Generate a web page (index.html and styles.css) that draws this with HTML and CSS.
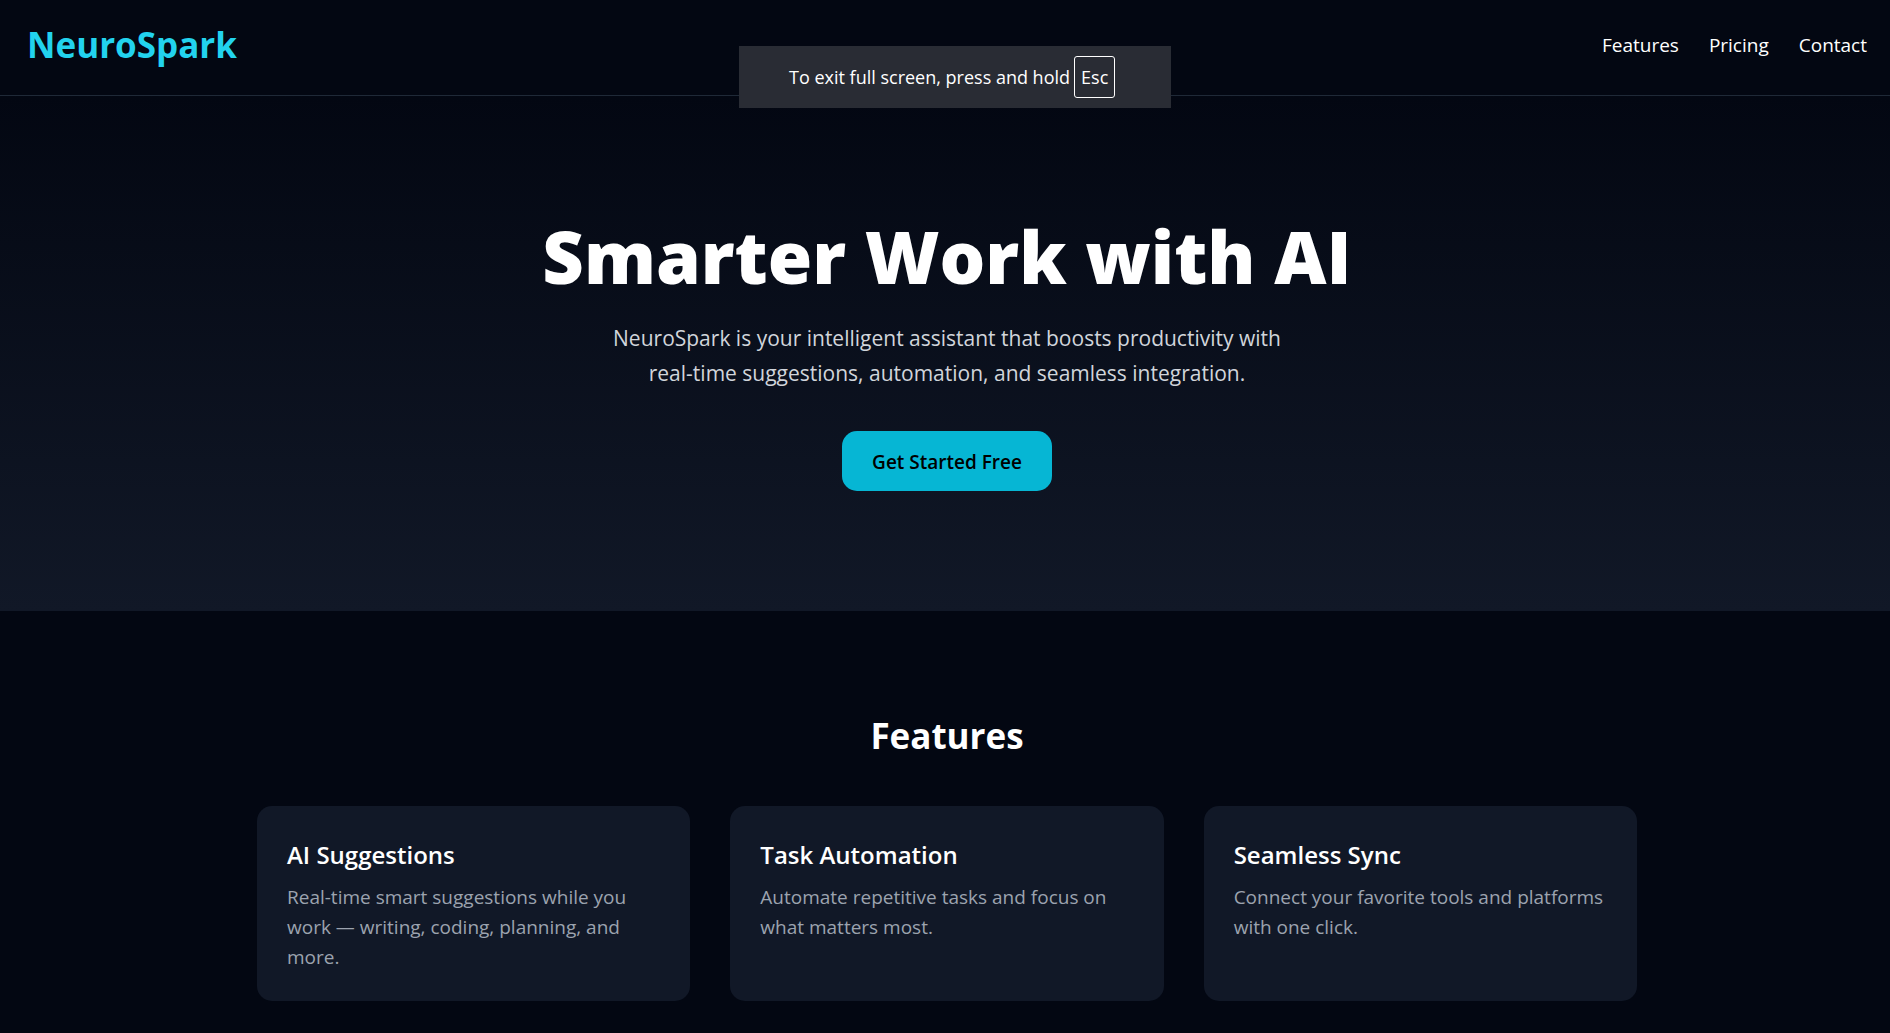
FILE: index.html
```html
<!DOCTYPE html>
<html lang="en">
<head>
  <meta charset="utf-8">
  <meta name="viewport" content="width=device-width, initial-scale=1">
  <title>NeuroSpark</title>
  <link rel="stylesheet" href="styles.css">
</head>
<body>
  <header class="site-header">
    <div class="logo">NeuroSpark</div>
    <nav class="site-nav">
      <a href="#features">Features</a>
      <a href="#pricing">Pricing</a>
      <a href="#contact">Contact</a>
    </nav>
  </header>

  <main>
    <section class="hero">
      <h1>Smarter Work with AI</h1>
      <p>NeuroSpark is your intelligent assistant that boosts productivity with real-time suggestions, automation, and seamless integration.</p>
      <button type="button" class="cta">Get Started Free</button>
    </section>

    <section class="features" id="features">
      <h2>Features</h2>
      <div class="feature-grid">
        <article class="card">
          <h3>AI Suggestions</h3>
          <p>Real-time smart suggestions while you work — writing, coding, planning, and more.</p>
        </article>
        <article class="card">
          <h3>Task Automation</h3>
          <p>Automate repetitive tasks and focus on what matters most.</p>
        </article>
        <article class="card">
          <h3>Seamless Sync</h3>
          <p>Connect your favorite tools and platforms with one click.</p>
        </article>
      </div>
    </section>
  </main>

  <div class="toast" role="status">
    <span>To exit full screen, press and hold</span>
    <kbd>Esc</kbd>
  </div>
</body>
</html>
```
FILE: styles.css
```css
* {
  box-sizing: border-box;
  margin: 0;
}

body {
  background: #030712;
  color: #fff;
  font: 400 19px/30px "Open Sans", "Noto Sans", sans-serif;
}

.site-header {
  display: flex;
  justify-content: space-between;
  padding: 22px 23px 28px 27px;
  border-bottom: 1px solid #1f2937;
}

.logo {
  color: #22d3ee;
  font-size: 35px;
  font-weight: 700;
  line-height: 45px;
}

.site-nav {
  display: flex;
  align-items: center;
  gap: 30px;
}

.site-nav a {
  color: inherit;
  text-decoration: none;
}

.hero {
  display: flex;
  flex-direction: column;
  align-items: center;
  padding: 120px 23px 120px 27px;
  background: linear-gradient(to bottom, #030712, #111827);
  text-align: center;
}

.hero h1 {
  margin-bottom: 25px;
  font-size: 72px;
  font-weight: 800;
  line-height: 80px;
}

.hero p {
  max-width: 700px;
  margin-bottom: 40px;
  color: #d1d5db;
  font-size: 21px;
  line-height: 35px;
}

.cta {
  padding: 16px 30px 14px;
  border: 0;
  border-radius: 15px;
  background: #06b6d4;
  color: #000;
  font: inherit;
  font-weight: 600;
}

.features {
  padding: 100px 23px 32px 27px;
}

.features h2 {
  margin-bottom: 45px;
  font-size: 35px;
  font-weight: 700;
  line-height: 50px;
  text-align: center;
}

.feature-grid {
  display: grid;
  grid-template-columns: repeat(3, 1fr);
  gap: 40px;
  max-width: 1380px;
  margin: 0 auto;
}

.card {
  padding: 31px 30px 29px;
  border-radius: 15px;
  background: #111827;
}

.card h3 {
  margin-bottom: 10px;
  font-size: 24px;
  font-weight: 600;
  line-height: 35px;
}

.card p {
  color: #9ca3af;
}

/* Browser notice that floats over the page */
.toast {
  position: fixed;
  top: 46px;
  left: calc(50% + 10px);
  display: flex;
  align-items: center;
  gap: 4px;
  width: 432px;
  padding: 10px 50px;
  transform: translateX(-50%);
  background: #292c34;
  font-size: 18px;
  white-space: nowrap;
}

.toast kbd {
  padding: 6px;
  border: 1px solid #fff;
  border-radius: 3px;
  font: inherit;
  line-height: 28px;
}
```
